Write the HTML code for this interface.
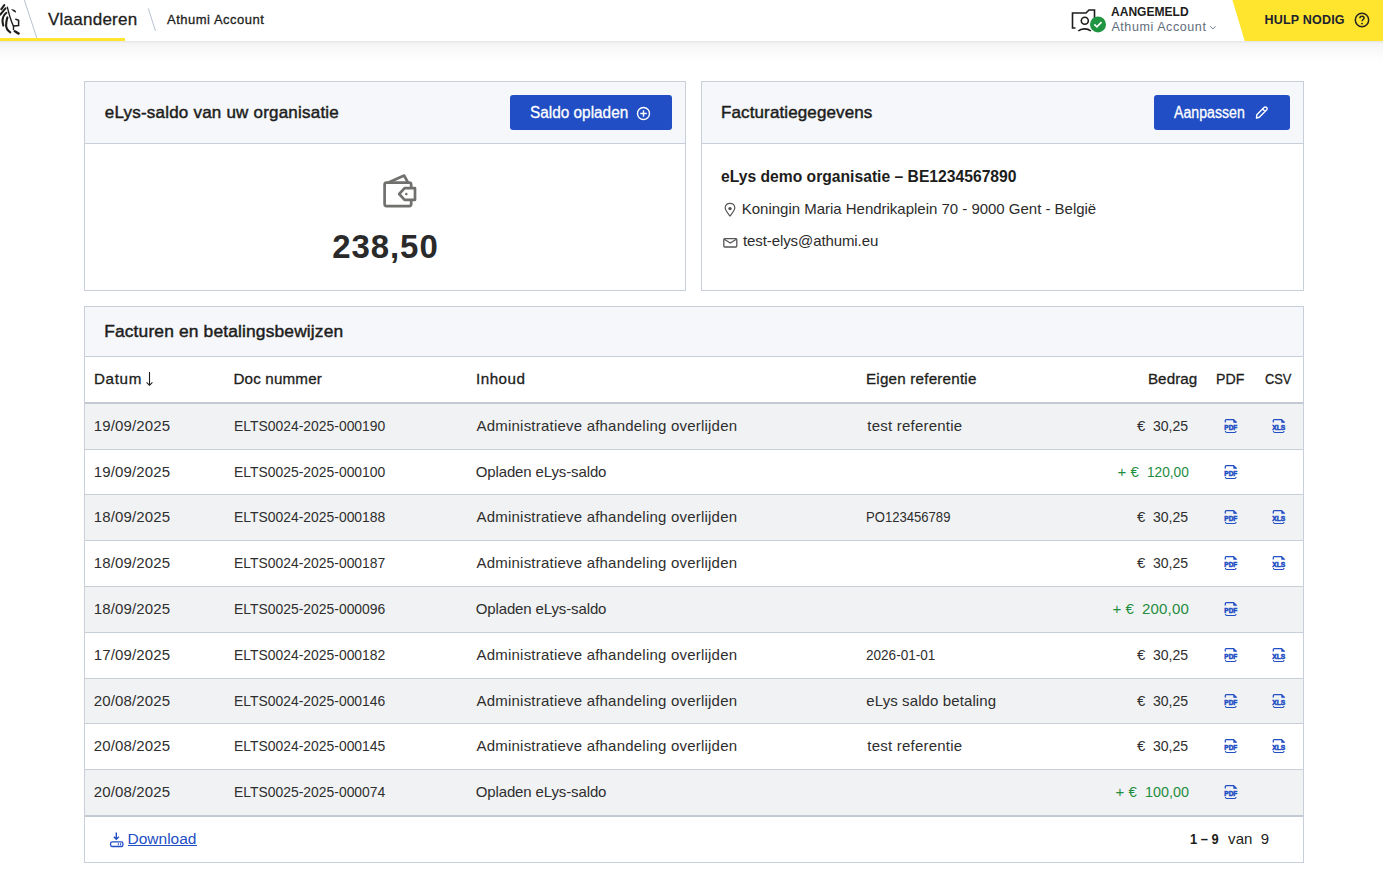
<!DOCTYPE html>
<html><head><meta charset="utf-8"><title>eLys</title>
<style>
html,body{margin:0;padding:0;background:#fff;width:1383px;height:879px;overflow:hidden;position:relative}
body{font-family:"Liberation Sans", sans-serif;}
.abs{position:absolute;box-sizing:border-box}
.t{position:absolute;white-space:nowrap;line-height:1;font-family:"Liberation Sans", sans-serif}
.hshadow{position:absolute;left:0;top:41px;width:1383px;height:22px;background:linear-gradient(#e6e6e6 0px,#e9e9e9 1px,#f3f3f3 2px,#f7f7f7 6px,#fbfbfb 13px,#fff 22px)}
.card{position:absolute;box-sizing:border-box;border:1px solid #c8cfd8;background:#fff}
.btn{position:absolute;background:#214ec4;border-radius:3px}
</style></head><body>
<div class="hshadow"></div>
<div class="abs" style="left:0;top:38px;width:125px;height:3px;background:#ffe52e"></div>
<svg class="abs" style="left:0;top:0" width="300" height="41"><line x1="24.3" y1="0" x2="36.8" y2="38" stroke="#b7c2d0" stroke-width="1"/><line x1="148.3" y1="8.5" x2="155.5" y2="31" stroke="#b7c2d0" stroke-width="1"/></svg>
<svg class="abs" style="left:0;top:0" width="24" height="38" viewBox="0 0 24 38">
<g fill="none" stroke="#1d1d1b" stroke-linecap="round">
<path d="M1.4 9.1 L4.3 5" stroke-width="2.1"/>
<path d="M0.3 14.6 C2 12.5 4 10.3 5.5 8.4" stroke-width="2.1"/>
<path d="M3.3 25.6 C2.3 22.5 2.2 19.5 3.2 17 C4 15 5.3 13.6 6.4 12.8" stroke-width="2"/>
<path d="M10.3 32.3 C7.5 30.5 6 28 6.1 25 C6.2 22 6.7 19.5 7.4 17.4" stroke-width="2.1"/>
<path d="M7.4 7.3 C9 14 11 21 13.5 26.2 V29.4" stroke-width="1.4"/>
<path d="M13.5 26.1 C15.5 25.6 17 25.9 18.6 25.6 V20.2 L15.8 19.3" stroke-width="1.5"/>
<path d="M14.6 31.1 C16 32 17.3 33 18.7 33.6" stroke-width="2.3"/>
</g><polygon points="10.8,9 14.3,9.7 16,11.2 15.7,12.8 13,10.9" fill="#1d1d1b"/><g>
</g></svg>
<svg class="abs" style="left:1070px;top:7px" width="38" height="30" viewBox="0 0 38 30">
<g fill="none" stroke="#1d1d1b" stroke-width="1.6">
<path d="M5.5 21 H2.5 V6 H16 L19 3 H24.5 V11"/>
<circle cx="14.8" cy="13.7" r="3.5"/>
<path d="M8.3 24 C11 21.3 17.5 21 20.8 24"/>
</g>
<circle cx="28" cy="17.4" r="8" fill="#1f9441"/>
<path d="M24.3 17.4 L26.9 19.9 L31.5 15.1" fill="none" stroke="#fff" stroke-width="1.6"/>
</svg>
<svg class="abs" style="left:1209px;top:25px" width="8" height="6"><path d="M1.2 1.3 L3.9 3.9 L6.6 1.3" fill="none" stroke="#6a7686" stroke-width="0.95"/></svg>
<svg class="abs" style="left:1230px;top:0" width="153" height="41"><polygon points="2.4,0 153,0 153,41 14.7,41" fill="#ffe52e"/></svg>
<svg class="abs" style="left:1354px;top:12px" width="16" height="16" viewBox="0 0 16 16"><circle cx="8" cy="8" r="6.7" fill="none" stroke="#262626" stroke-width="1.5"/><path d="M5.9 6.3 C5.9 4.9 6.9 4.2 8 4.2 C9.2 4.2 10.1 5 10.1 6.1 C10.1 7.5 8.1 7.6 8.1 9.2" fill="none" stroke="#262626" stroke-width="1.5"/><circle cx="8" cy="11.6" r="0.95" fill="#262626"/></svg>
<div class="card" style="left:84px;top:81px;width:602px;height:210px"></div>
<div class="abs" style="left:85px;top:82px;width:600px;height:62px;background:#f5f7fa;border-bottom:1px solid #c8cfd8"></div>
<div class="btn" style="left:510px;top:95px;width:162px;height:35px"></div>
<svg class="abs" style="left:636px;top:106px" width="15" height="15" viewBox="0 0 15 15"><circle cx="7.5" cy="7.5" r="6" fill="none" stroke="#fff" stroke-width="1.4"/><path d="M7.5 4.3 V10.7 M4.3 7.5 H10.7" stroke="#fff" stroke-width="1.4"/></svg>
<svg class="abs" style="left:380px;top:170px" width="40" height="40" viewBox="0 0 40 40">
<g fill="none" stroke="#70706e" stroke-width="2.7" stroke-linejoin="round" stroke-linecap="round">
<path d="M31.2 17.5 V14.7 Q31.2 12.7 29.2 12.7 H6.6 Q4.6 12.7 4.6 14.7 V34.1 Q4.6 36.1 6.6 36.1 H29.2 Q31.2 36.1 31.2 34.1 V30.5"/>
<path d="M8.5 12.5 L24.2 5.6 L27.4 11.5"/>
<path d="M24.6 18.2 H35 V29.8 H24.6 L19.2 24 Z"/>
</g>
<circle cx="26.3" cy="24" r="1.3" fill="#70706e"/>
</svg>
<div class="card" style="left:701px;top:81px;width:603px;height:210px"></div>
<div class="abs" style="left:702px;top:82px;width:601px;height:62px;background:#f5f7fa;border-bottom:1px solid #c8cfd8"></div>
<div class="btn" style="left:1154px;top:95px;width:136px;height:35px"></div>
<svg class="abs" style="left:1251.5px;top:104px" width="18" height="17" viewBox="0 0 18 17"><path d="M4.5 14 L4.8 10.8 L12 3.6 C12.8 2.8 13.9 2.8 14.6 3.5 C15.3 4.2 15.3 5.3 14.5 6.1 L7.3 13.3 Z M10.6 5 L13.1 7.5" fill="none" stroke="#fff" stroke-width="1.4" stroke-linejoin="round"/></svg>
<svg class="abs" style="left:722px;top:201px" width="16" height="17" viewBox="0 0 16 17"><path d="M8 15 C5.6 12 3.2 9.5 3.2 6.8 C3.2 4.1 5.3 2.3 8 2.3 C10.7 2.3 12.8 4.1 12.8 6.8 C12.8 9.5 10.4 12 8 15 Z" fill="none" stroke="#555" stroke-width="1.2"/><circle cx="8" cy="7.6" r="1.7" fill="#555"/></svg>
<svg class="abs" style="left:722px;top:236px" width="16" height="12" viewBox="0 0 16 12"><rect x="1.8" y="2.6" width="13" height="8.4" rx="1" fill="none" stroke="#555" stroke-width="1.3"/><path d="M2.2 3.2 L8.3 7 L14.4 3.2" fill="none" stroke="#555" stroke-width="1.3"/></svg>
<div class="card" style="left:84px;top:306px;width:1220px;height:557px"></div>
<div class="abs" style="left:85px;top:307px;width:1218px;height:50px;background:#f5f7fa;border-bottom:1px solid #c8cfd8"></div>
<div class="abs" style="left:85px;top:402px;width:1218px;height:2px;background:#c3cad4"></div>
<svg class="abs" style="left:144px;top:370px" width="10" height="18" viewBox="0 0 10 18"><path d="M5.5 2 V15.5 M2.6 12.4 L5.5 15.3 L8.4 12.4" fill="none" stroke="#1d1d1b" stroke-width="1.1"/></svg>
<div class="abs" style="left:85px;top:404px;width:1218px;height:45px;background:#f1f2f4"></div>
<div class="abs" style="left:85px;top:449px;width:1218px;height:1px;background:#c8cfd8"></div>
<svg class="abs" style="left:1224px;top:418px" width="15" height="16" viewBox="0 0 15 16"><path d="M1.3 4.6 V2.6 Q1.3 1.6 2.3 1.6 H9.6 L12.6 4.4 V4.6" fill="none" stroke="#214ec4" stroke-width="1.25"/><path d="M9.3 1.3 L12.9 4.7 H9.3 Z" fill="#214ec4"/><path d="M1.4 13 Q1.6 14.5 2.8 14.5 H10.6 Q11.9 14.5 12.1 13" fill="none" stroke="#214ec4" stroke-width="1.2"/><text x="0.3" y="11.9" textLength="13" lengthAdjust="spacingAndGlyphs" font-family="Liberation Sans" font-weight="700" font-size="7.2" fill="#214ec4" stroke="#214ec4" stroke-width="0.55">PDF</text></svg>
<svg class="abs" style="left:1272px;top:418px" width="15" height="16" viewBox="0 0 15 16"><path d="M1.3 4.6 V2.6 Q1.3 1.6 2.3 1.6 H9.6 L12.6 4.4 V4.6" fill="none" stroke="#214ec4" stroke-width="1.25"/><path d="M9.3 1.3 L12.9 4.7 H9.3 Z" fill="#214ec4"/><path d="M1.4 13 Q1.6 14.5 2.8 14.5 H10.6 Q11.9 14.5 12.1 13" fill="none" stroke="#214ec4" stroke-width="1.2"/><text x="0.3" y="11.9" textLength="13" lengthAdjust="spacingAndGlyphs" font-family="Liberation Sans" font-weight="700" font-size="7.2" fill="#214ec4" stroke="#214ec4" stroke-width="0.55">XLS</text></svg>
<div class="abs" style="left:85px;top:450px;width:1218px;height:44px;background:#fff"></div>
<div class="abs" style="left:85px;top:494px;width:1218px;height:1px;background:#c8cfd8"></div>
<svg class="abs" style="left:1224px;top:464px" width="15" height="16" viewBox="0 0 15 16"><path d="M1.3 4.6 V2.6 Q1.3 1.6 2.3 1.6 H9.6 L12.6 4.4 V4.6" fill="none" stroke="#214ec4" stroke-width="1.25"/><path d="M9.3 1.3 L12.9 4.7 H9.3 Z" fill="#214ec4"/><path d="M1.4 13 Q1.6 14.5 2.8 14.5 H10.6 Q11.9 14.5 12.1 13" fill="none" stroke="#214ec4" stroke-width="1.2"/><text x="0.3" y="11.9" textLength="13" lengthAdjust="spacingAndGlyphs" font-family="Liberation Sans" font-weight="700" font-size="7.2" fill="#214ec4" stroke="#214ec4" stroke-width="0.55">PDF</text></svg>
<div class="abs" style="left:85px;top:495px;width:1218px;height:45px;background:#f1f2f4"></div>
<div class="abs" style="left:85px;top:540px;width:1218px;height:1px;background:#c8cfd8"></div>
<svg class="abs" style="left:1224px;top:509px" width="15" height="16" viewBox="0 0 15 16"><path d="M1.3 4.6 V2.6 Q1.3 1.6 2.3 1.6 H9.6 L12.6 4.4 V4.6" fill="none" stroke="#214ec4" stroke-width="1.25"/><path d="M9.3 1.3 L12.9 4.7 H9.3 Z" fill="#214ec4"/><path d="M1.4 13 Q1.6 14.5 2.8 14.5 H10.6 Q11.9 14.5 12.1 13" fill="none" stroke="#214ec4" stroke-width="1.2"/><text x="0.3" y="11.9" textLength="13" lengthAdjust="spacingAndGlyphs" font-family="Liberation Sans" font-weight="700" font-size="7.2" fill="#214ec4" stroke="#214ec4" stroke-width="0.55">PDF</text></svg>
<svg class="abs" style="left:1272px;top:509px" width="15" height="16" viewBox="0 0 15 16"><path d="M1.3 4.6 V2.6 Q1.3 1.6 2.3 1.6 H9.6 L12.6 4.4 V4.6" fill="none" stroke="#214ec4" stroke-width="1.25"/><path d="M9.3 1.3 L12.9 4.7 H9.3 Z" fill="#214ec4"/><path d="M1.4 13 Q1.6 14.5 2.8 14.5 H10.6 Q11.9 14.5 12.1 13" fill="none" stroke="#214ec4" stroke-width="1.2"/><text x="0.3" y="11.9" textLength="13" lengthAdjust="spacingAndGlyphs" font-family="Liberation Sans" font-weight="700" font-size="7.2" fill="#214ec4" stroke="#214ec4" stroke-width="0.55">XLS</text></svg>
<div class="abs" style="left:85px;top:541px;width:1218px;height:45px;background:#fff"></div>
<div class="abs" style="left:85px;top:586px;width:1218px;height:1px;background:#c8cfd8"></div>
<svg class="abs" style="left:1224px;top:555px" width="15" height="16" viewBox="0 0 15 16"><path d="M1.3 4.6 V2.6 Q1.3 1.6 2.3 1.6 H9.6 L12.6 4.4 V4.6" fill="none" stroke="#214ec4" stroke-width="1.25"/><path d="M9.3 1.3 L12.9 4.7 H9.3 Z" fill="#214ec4"/><path d="M1.4 13 Q1.6 14.5 2.8 14.5 H10.6 Q11.9 14.5 12.1 13" fill="none" stroke="#214ec4" stroke-width="1.2"/><text x="0.3" y="11.9" textLength="13" lengthAdjust="spacingAndGlyphs" font-family="Liberation Sans" font-weight="700" font-size="7.2" fill="#214ec4" stroke="#214ec4" stroke-width="0.55">PDF</text></svg>
<svg class="abs" style="left:1272px;top:555px" width="15" height="16" viewBox="0 0 15 16"><path d="M1.3 4.6 V2.6 Q1.3 1.6 2.3 1.6 H9.6 L12.6 4.4 V4.6" fill="none" stroke="#214ec4" stroke-width="1.25"/><path d="M9.3 1.3 L12.9 4.7 H9.3 Z" fill="#214ec4"/><path d="M1.4 13 Q1.6 14.5 2.8 14.5 H10.6 Q11.9 14.5 12.1 13" fill="none" stroke="#214ec4" stroke-width="1.2"/><text x="0.3" y="11.9" textLength="13" lengthAdjust="spacingAndGlyphs" font-family="Liberation Sans" font-weight="700" font-size="7.2" fill="#214ec4" stroke="#214ec4" stroke-width="0.55">XLS</text></svg>
<div class="abs" style="left:85px;top:587px;width:1218px;height:45px;background:#f1f2f4"></div>
<div class="abs" style="left:85px;top:632px;width:1218px;height:1px;background:#c8cfd8"></div>
<svg class="abs" style="left:1224px;top:601px" width="15" height="16" viewBox="0 0 15 16"><path d="M1.3 4.6 V2.6 Q1.3 1.6 2.3 1.6 H9.6 L12.6 4.4 V4.6" fill="none" stroke="#214ec4" stroke-width="1.25"/><path d="M9.3 1.3 L12.9 4.7 H9.3 Z" fill="#214ec4"/><path d="M1.4 13 Q1.6 14.5 2.8 14.5 H10.6 Q11.9 14.5 12.1 13" fill="none" stroke="#214ec4" stroke-width="1.2"/><text x="0.3" y="11.9" textLength="13" lengthAdjust="spacingAndGlyphs" font-family="Liberation Sans" font-weight="700" font-size="7.2" fill="#214ec4" stroke="#214ec4" stroke-width="0.55">PDF</text></svg>
<div class="abs" style="left:85px;top:633px;width:1218px;height:45px;background:#fff"></div>
<div class="abs" style="left:85px;top:678px;width:1218px;height:1px;background:#c8cfd8"></div>
<svg class="abs" style="left:1224px;top:647px" width="15" height="16" viewBox="0 0 15 16"><path d="M1.3 4.6 V2.6 Q1.3 1.6 2.3 1.6 H9.6 L12.6 4.4 V4.6" fill="none" stroke="#214ec4" stroke-width="1.25"/><path d="M9.3 1.3 L12.9 4.7 H9.3 Z" fill="#214ec4"/><path d="M1.4 13 Q1.6 14.5 2.8 14.5 H10.6 Q11.9 14.5 12.1 13" fill="none" stroke="#214ec4" stroke-width="1.2"/><text x="0.3" y="11.9" textLength="13" lengthAdjust="spacingAndGlyphs" font-family="Liberation Sans" font-weight="700" font-size="7.2" fill="#214ec4" stroke="#214ec4" stroke-width="0.55">PDF</text></svg>
<svg class="abs" style="left:1272px;top:647px" width="15" height="16" viewBox="0 0 15 16"><path d="M1.3 4.6 V2.6 Q1.3 1.6 2.3 1.6 H9.6 L12.6 4.4 V4.6" fill="none" stroke="#214ec4" stroke-width="1.25"/><path d="M9.3 1.3 L12.9 4.7 H9.3 Z" fill="#214ec4"/><path d="M1.4 13 Q1.6 14.5 2.8 14.5 H10.6 Q11.9 14.5 12.1 13" fill="none" stroke="#214ec4" stroke-width="1.2"/><text x="0.3" y="11.9" textLength="13" lengthAdjust="spacingAndGlyphs" font-family="Liberation Sans" font-weight="700" font-size="7.2" fill="#214ec4" stroke="#214ec4" stroke-width="0.55">XLS</text></svg>
<div class="abs" style="left:85px;top:679px;width:1218px;height:44px;background:#f1f2f4"></div>
<div class="abs" style="left:85px;top:723px;width:1218px;height:1px;background:#c8cfd8"></div>
<svg class="abs" style="left:1224px;top:693px" width="15" height="16" viewBox="0 0 15 16"><path d="M1.3 4.6 V2.6 Q1.3 1.6 2.3 1.6 H9.6 L12.6 4.4 V4.6" fill="none" stroke="#214ec4" stroke-width="1.25"/><path d="M9.3 1.3 L12.9 4.7 H9.3 Z" fill="#214ec4"/><path d="M1.4 13 Q1.6 14.5 2.8 14.5 H10.6 Q11.9 14.5 12.1 13" fill="none" stroke="#214ec4" stroke-width="1.2"/><text x="0.3" y="11.9" textLength="13" lengthAdjust="spacingAndGlyphs" font-family="Liberation Sans" font-weight="700" font-size="7.2" fill="#214ec4" stroke="#214ec4" stroke-width="0.55">PDF</text></svg>
<svg class="abs" style="left:1272px;top:693px" width="15" height="16" viewBox="0 0 15 16"><path d="M1.3 4.6 V2.6 Q1.3 1.6 2.3 1.6 H9.6 L12.6 4.4 V4.6" fill="none" stroke="#214ec4" stroke-width="1.25"/><path d="M9.3 1.3 L12.9 4.7 H9.3 Z" fill="#214ec4"/><path d="M1.4 13 Q1.6 14.5 2.8 14.5 H10.6 Q11.9 14.5 12.1 13" fill="none" stroke="#214ec4" stroke-width="1.2"/><text x="0.3" y="11.9" textLength="13" lengthAdjust="spacingAndGlyphs" font-family="Liberation Sans" font-weight="700" font-size="7.2" fill="#214ec4" stroke="#214ec4" stroke-width="0.55">XLS</text></svg>
<div class="abs" style="left:85px;top:724px;width:1218px;height:45px;background:#fff"></div>
<div class="abs" style="left:85px;top:769px;width:1218px;height:1px;background:#c8cfd8"></div>
<svg class="abs" style="left:1224px;top:738px" width="15" height="16" viewBox="0 0 15 16"><path d="M1.3 4.6 V2.6 Q1.3 1.6 2.3 1.6 H9.6 L12.6 4.4 V4.6" fill="none" stroke="#214ec4" stroke-width="1.25"/><path d="M9.3 1.3 L12.9 4.7 H9.3 Z" fill="#214ec4"/><path d="M1.4 13 Q1.6 14.5 2.8 14.5 H10.6 Q11.9 14.5 12.1 13" fill="none" stroke="#214ec4" stroke-width="1.2"/><text x="0.3" y="11.9" textLength="13" lengthAdjust="spacingAndGlyphs" font-family="Liberation Sans" font-weight="700" font-size="7.2" fill="#214ec4" stroke="#214ec4" stroke-width="0.55">PDF</text></svg>
<svg class="abs" style="left:1272px;top:738px" width="15" height="16" viewBox="0 0 15 16"><path d="M1.3 4.6 V2.6 Q1.3 1.6 2.3 1.6 H9.6 L12.6 4.4 V4.6" fill="none" stroke="#214ec4" stroke-width="1.25"/><path d="M9.3 1.3 L12.9 4.7 H9.3 Z" fill="#214ec4"/><path d="M1.4 13 Q1.6 14.5 2.8 14.5 H10.6 Q11.9 14.5 12.1 13" fill="none" stroke="#214ec4" stroke-width="1.2"/><text x="0.3" y="11.9" textLength="13" lengthAdjust="spacingAndGlyphs" font-family="Liberation Sans" font-weight="700" font-size="7.2" fill="#214ec4" stroke="#214ec4" stroke-width="0.55">XLS</text></svg>
<div class="abs" style="left:85px;top:770px;width:1218px;height:45px;background:#f1f2f4"></div>
<div class="abs" style="left:85px;top:815px;width:1218px;height:2px;background:#c3cad4"></div>
<svg class="abs" style="left:1224px;top:784px" width="15" height="16" viewBox="0 0 15 16"><path d="M1.3 4.6 V2.6 Q1.3 1.6 2.3 1.6 H9.6 L12.6 4.4 V4.6" fill="none" stroke="#214ec4" stroke-width="1.25"/><path d="M9.3 1.3 L12.9 4.7 H9.3 Z" fill="#214ec4"/><path d="M1.4 13 Q1.6 14.5 2.8 14.5 H10.6 Q11.9 14.5 12.1 13" fill="none" stroke="#214ec4" stroke-width="1.2"/><text x="0.3" y="11.9" textLength="13" lengthAdjust="spacingAndGlyphs" font-family="Liberation Sans" font-weight="700" font-size="7.2" fill="#214ec4" stroke="#214ec4" stroke-width="0.55">PDF</text></svg>
<svg class="abs" style="left:108px;top:831px" width="17" height="17" viewBox="0 0 17 17"><path d="M8.3 1.5 V8.2 M5.8 5.8 L8.3 8.3 L10.8 5.8" fill="none" stroke="#214ec4" stroke-width="1.4"/><rect x="2.6" y="10.9" width="12.3" height="4.6" rx="1.6" fill="none" stroke="#214ec4" stroke-width="1.3"/><path d="M10.3 12.2 V14.2 M12.6 12.2 V14.2" stroke="#214ec4" stroke-width="1"/></svg>
<div class="abs" style="left:128px;top:845px;width:69px;height:1px;background:#214ec4"></div>
<div class="t" style="left:48.0px;top:11px;font-size:17px;font-weight:400;color:#1d1d1b;letter-spacing:0.244px;-webkit-text-stroke:0.3px #1d1d1b;">Vlaanderen</div>
<div class="t" style="left:167.0px;top:13px;font-size:13px;font-weight:400;color:#1d1d1b;letter-spacing:0.508px;-webkit-text-stroke:0.3px #1d1d1b;">Athumi Account</div>
<div class="t" style="left:1111.4px;top:6px;font-size:12.5px;font-weight:700;color:#1d1d1b;letter-spacing:0px;transform:scaleX(0.9637);transform-origin:0 0;">AANGEMELD</div>
<div class="t" style="left:1111.4px;top:21px;font-size:12.5px;font-weight:400;color:#5f6c7c;letter-spacing:0.585px;">Athumi Account</div>
<div class="t" style="left:1264.5px;top:14px;font-size:12.5px;font-weight:700;color:#1c2230;letter-spacing:0.2px;">HULP NODIG</div>
<div class="t" style="left:104.8px;top:104px;font-size:17px;font-weight:400;color:#1d1d1b;letter-spacing:0.211px;-webkit-text-stroke:0.45px #1d1d1b;">eLys-saldo van uw organisatie</div>
<div class="t" style="left:529.54px;top:105px;font-size:16px;font-weight:400;color:#fff;letter-spacing:0px;-webkit-text-stroke:0.3px #fff;transform:scaleX(0.9604);transform-origin:0 0;">Saldo opladen</div>
<div class="t" style="left:332.3px;top:230px;font-size:33px;font-weight:700;color:#2a2a2a;letter-spacing:0.9px;">238,50</div>
<div class="t" style="left:721.0px;top:104px;font-size:17px;font-weight:400;color:#1d1d1b;letter-spacing:0.118px;-webkit-text-stroke:0.45px #1d1d1b;">Facturatiegegevens</div>
<div class="t" style="left:1174.0px;top:105px;font-size:16px;font-weight:400;color:#fff;letter-spacing:0px;-webkit-text-stroke:0.3px #fff;transform:scaleX(0.885);transform-origin:0 0;">Aanpassen</div>
<div class="t" style="left:721.05px;top:168px;font-size:16.5px;font-weight:700;color:#1d1d1b;letter-spacing:0px;transform:scaleX(0.9494);transform-origin:0 0;">eLys demo organisatie – BE1234567890</div>
<div class="t" style="left:741.8px;top:201px;font-size:15px;font-weight:400;color:#2b2b2b;letter-spacing:-0.016px;">Koningin Maria Hendrikaplein 70 - 9000 Gent - België</div>
<div class="t" style="left:743.0px;top:233px;font-size:15px;font-weight:400;color:#2b2b2b;letter-spacing:-0.094px;">test-elys@athumi.eu</div>
<div class="t" style="left:104.2px;top:323px;font-size:17.4px;font-weight:400;color:#1d1d1b;letter-spacing:0.146px;-webkit-text-stroke:0.45px #1d1d1b;">Facturen en betalingsbewijzen</div>
<div class="t" style="left:94.0px;top:371px;font-size:15.2px;font-weight:400;color:#1d1d1b;letter-spacing:0.65px;-webkit-text-stroke:0.3px #1d1d1b;">Datum</div>
<div class="t" style="left:233.4px;top:371px;font-size:15.2px;font-weight:400;color:#1d1d1b;letter-spacing:0.167px;-webkit-text-stroke:0.3px #1d1d1b;">Doc nummer</div>
<div class="t" style="left:476.0px;top:371px;font-size:15.2px;font-weight:400;color:#1d1d1b;letter-spacing:0.48px;-webkit-text-stroke:0.3px #1d1d1b;">Inhoud</div>
<div class="t" style="left:866.0px;top:371px;font-size:15.2px;font-weight:400;color:#1d1d1b;letter-spacing:0.207px;-webkit-text-stroke:0.3px #1d1d1b;">Eigen referentie</div>
<div class="t" style="left:1147.9px;top:371px;font-size:15.2px;font-weight:400;color:#1d1d1b;letter-spacing:0.08px;-webkit-text-stroke:0.3px #1d1d1b;">Bedrag</div>
<div class="t" style="left:1216.07px;top:371px;font-size:15.2px;font-weight:400;color:#1d1d1b;letter-spacing:0px;-webkit-text-stroke:0.3px #1d1d1b;transform:scaleX(0.931);transform-origin:0 0;">PDF</div>
<div class="t" style="left:1264.85px;top:371px;font-size:15.2px;font-weight:400;color:#1d1d1b;letter-spacing:0px;-webkit-text-stroke:0.3px #1d1d1b;transform:scaleX(0.8467);transform-origin:0 0;">CSV</div>
<div class="t" style="left:93.8px;top:418px;font-size:15px;font-weight:400;color:#2e2e2e;letter-spacing:0.133px;">19/09/2025</div>
<div class="t" style="left:233.67px;top:418px;font-size:15px;font-weight:400;color:#2e2e2e;letter-spacing:0px;transform:scaleX(0.9272);transform-origin:0 0;">ELTS0024-2025-000190</div>
<div class="t" style="left:476.5px;top:418px;font-size:15px;font-weight:400;color:#2e2e2e;letter-spacing:0.214px;">Administratieve afhandeling overlijden</div>
<div class="t" style="left:867.3px;top:418px;font-size:15px;font-weight:400;color:#2e2e2e;letter-spacing:0.221px;">test referentie</div>
<div class="t" style="left:1153.26px;top:418px;font-size:15px;font-weight:400;color:#2e2e2e;letter-spacing:0px;transform:scaleX(0.9361);transform-origin:0 0;">30,25</div>
<div class="t" style="left:1136.9px;top:418px;font-size:15px;font-weight:400;color:#2e2e2e;letter-spacing:0px;">€</div>
<div class="t" style="left:93.8px;top:464px;font-size:15px;font-weight:400;color:#2e2e2e;letter-spacing:0.133px;">19/09/2025</div>
<div class="t" style="left:233.67px;top:464px;font-size:15px;font-weight:400;color:#2e2e2e;letter-spacing:0px;transform:scaleX(0.9272);transform-origin:0 0;">ELTS0025-2025-000100</div>
<div class="t" style="left:475.7px;top:464px;font-size:15px;font-weight:400;color:#2e2e2e;letter-spacing:-0.124px;">Opladen eLys-saldo</div>
<div class="t" style="left:1146.89px;top:464px;font-size:15px;font-weight:400;color:#1e8d40;letter-spacing:0px;transform:scaleX(0.9114);transform-origin:0 0;">120,00</div>
<div class="t" style="left:1130.5px;top:464px;font-size:15px;font-weight:400;color:#1e8d40;letter-spacing:0px;">€</div>
<div class="t" style="left:1117.4px;top:464px;font-size:15px;font-weight:400;color:#1e8d40;letter-spacing:0px;">+</div>
<div class="t" style="left:93.8px;top:509px;font-size:15px;font-weight:400;color:#2e2e2e;letter-spacing:0.133px;">18/09/2025</div>
<div class="t" style="left:233.67px;top:509px;font-size:15px;font-weight:400;color:#2e2e2e;letter-spacing:0px;transform:scaleX(0.9272);transform-origin:0 0;">ELTS0024-2025-000188</div>
<div class="t" style="left:476.5px;top:509px;font-size:15px;font-weight:400;color:#2e2e2e;letter-spacing:0.214px;">Administratieve afhandeling overlijden</div>
<div class="t" style="left:866.43px;top:509px;font-size:15px;font-weight:400;color:#2e2e2e;letter-spacing:0px;transform:scaleX(0.8726);transform-origin:0 0;">PO123456789</div>
<div class="t" style="left:1153.26px;top:509px;font-size:15px;font-weight:400;color:#2e2e2e;letter-spacing:0px;transform:scaleX(0.9361);transform-origin:0 0;">30,25</div>
<div class="t" style="left:1136.9px;top:509px;font-size:15px;font-weight:400;color:#2e2e2e;letter-spacing:0px;">€</div>
<div class="t" style="left:93.8px;top:555px;font-size:15px;font-weight:400;color:#2e2e2e;letter-spacing:0.133px;">18/09/2025</div>
<div class="t" style="left:233.67px;top:555px;font-size:15px;font-weight:400;color:#2e2e2e;letter-spacing:0px;transform:scaleX(0.9272);transform-origin:0 0;">ELTS0024-2025-000187</div>
<div class="t" style="left:476.5px;top:555px;font-size:15px;font-weight:400;color:#2e2e2e;letter-spacing:0.214px;">Administratieve afhandeling overlijden</div>
<div class="t" style="left:1153.26px;top:555px;font-size:15px;font-weight:400;color:#2e2e2e;letter-spacing:0px;transform:scaleX(0.9361);transform-origin:0 0;">30,25</div>
<div class="t" style="left:1136.9px;top:555px;font-size:15px;font-weight:400;color:#2e2e2e;letter-spacing:0px;">€</div>
<div class="t" style="left:93.8px;top:601px;font-size:15px;font-weight:400;color:#2e2e2e;letter-spacing:0.133px;">18/09/2025</div>
<div class="t" style="left:233.67px;top:601px;font-size:15px;font-weight:400;color:#2e2e2e;letter-spacing:0px;transform:scaleX(0.9272);transform-origin:0 0;">ELTS0025-2025-000096</div>
<div class="t" style="left:475.7px;top:601px;font-size:15px;font-weight:400;color:#2e2e2e;letter-spacing:-0.124px;">Opladen eLys-saldo</div>
<div class="t" style="left:1141.9px;top:601px;font-size:15px;font-weight:400;color:#1e8d40;letter-spacing:0.2px;">200,00</div>
<div class="t" style="left:1125.6px;top:601px;font-size:15px;font-weight:400;color:#1e8d40;letter-spacing:0px;">€</div>
<div class="t" style="left:1112.5px;top:601px;font-size:15px;font-weight:400;color:#1e8d40;letter-spacing:0px;">+</div>
<div class="t" style="left:93.8px;top:647px;font-size:15px;font-weight:400;color:#2e2e2e;letter-spacing:0.133px;">17/09/2025</div>
<div class="t" style="left:233.67px;top:647px;font-size:15px;font-weight:400;color:#2e2e2e;letter-spacing:0px;transform:scaleX(0.9272);transform-origin:0 0;">ELTS0024-2025-000182</div>
<div class="t" style="left:476.5px;top:647px;font-size:15px;font-weight:400;color:#2e2e2e;letter-spacing:0.214px;">Administratieve afhandeling overlijden</div>
<div class="t" style="left:866.4px;top:647px;font-size:15px;font-weight:400;color:#2e2e2e;letter-spacing:0px;transform:scaleX(0.904);transform-origin:0 0;">2026-01-01</div>
<div class="t" style="left:1153.26px;top:647px;font-size:15px;font-weight:400;color:#2e2e2e;letter-spacing:0px;transform:scaleX(0.9361);transform-origin:0 0;">30,25</div>
<div class="t" style="left:1136.9px;top:647px;font-size:15px;font-weight:400;color:#2e2e2e;letter-spacing:0px;">€</div>
<div class="t" style="left:93.8px;top:693px;font-size:15px;font-weight:400;color:#2e2e2e;letter-spacing:0.133px;">20/08/2025</div>
<div class="t" style="left:233.67px;top:693px;font-size:15px;font-weight:400;color:#2e2e2e;letter-spacing:0px;transform:scaleX(0.9272);transform-origin:0 0;">ELTS0024-2025-000146</div>
<div class="t" style="left:476.5px;top:693px;font-size:15px;font-weight:400;color:#2e2e2e;letter-spacing:0.214px;">Administratieve afhandeling overlijden</div>
<div class="t" style="left:866.3px;top:693px;font-size:15px;font-weight:400;color:#2e2e2e;letter-spacing:0.106px;">eLys saldo betaling</div>
<div class="t" style="left:1153.26px;top:693px;font-size:15px;font-weight:400;color:#2e2e2e;letter-spacing:0px;transform:scaleX(0.9361);transform-origin:0 0;">30,25</div>
<div class="t" style="left:1136.9px;top:693px;font-size:15px;font-weight:400;color:#2e2e2e;letter-spacing:0px;">€</div>
<div class="t" style="left:93.8px;top:738px;font-size:15px;font-weight:400;color:#2e2e2e;letter-spacing:0.133px;">20/08/2025</div>
<div class="t" style="left:233.67px;top:738px;font-size:15px;font-weight:400;color:#2e2e2e;letter-spacing:0px;transform:scaleX(0.9272);transform-origin:0 0;">ELTS0024-2025-000145</div>
<div class="t" style="left:476.5px;top:738px;font-size:15px;font-weight:400;color:#2e2e2e;letter-spacing:0.214px;">Administratieve afhandeling overlijden</div>
<div class="t" style="left:867.3px;top:738px;font-size:15px;font-weight:400;color:#2e2e2e;letter-spacing:0.221px;">test referentie</div>
<div class="t" style="left:1153.26px;top:738px;font-size:15px;font-weight:400;color:#2e2e2e;letter-spacing:0px;transform:scaleX(0.9361);transform-origin:0 0;">30,25</div>
<div class="t" style="left:1136.9px;top:738px;font-size:15px;font-weight:400;color:#2e2e2e;letter-spacing:0px;">€</div>
<div class="t" style="left:93.8px;top:784px;font-size:15px;font-weight:400;color:#2e2e2e;letter-spacing:0.133px;">20/08/2025</div>
<div class="t" style="left:233.67px;top:784px;font-size:15px;font-weight:400;color:#2e2e2e;letter-spacing:0px;transform:scaleX(0.9272);transform-origin:0 0;">ELTS0025-2025-000074</div>
<div class="t" style="left:475.7px;top:784px;font-size:15px;font-weight:400;color:#2e2e2e;letter-spacing:-0.124px;">Opladen eLys-saldo</div>
<div class="t" style="left:1144.84px;top:784px;font-size:15px;font-weight:400;color:#1e8d40;letter-spacing:0px;transform:scaleX(0.9568);transform-origin:0 0;">100,00</div>
<div class="t" style="left:1128.5px;top:784px;font-size:15px;font-weight:400;color:#1e8d40;letter-spacing:0px;">€</div>
<div class="t" style="left:1115.4px;top:784px;font-size:15px;font-weight:400;color:#1e8d40;letter-spacing:0px;">+</div>
<div class="t" style="left:127.5px;top:831px;font-size:15.5px;font-weight:400;color:#214ec4;letter-spacing:0px;">Download</div>
<div class="t" style="left:1189.64px;top:831px;font-size:15px;font-weight:700;color:#1d1d1b;letter-spacing:0px;transform:scaleX(0.8594);transform-origin:0 0;">1 – 9</div>
<div class="t" style="left:1228.1px;top:831px;font-size:15px;font-weight:400;color:#1d1d1b;letter-spacing:0.05px;">van</div>
<div class="t" style="left:1260.7px;top:831px;font-size:15px;font-weight:400;color:#1d1d1b;letter-spacing:0px;">9</div>
</body></html>
